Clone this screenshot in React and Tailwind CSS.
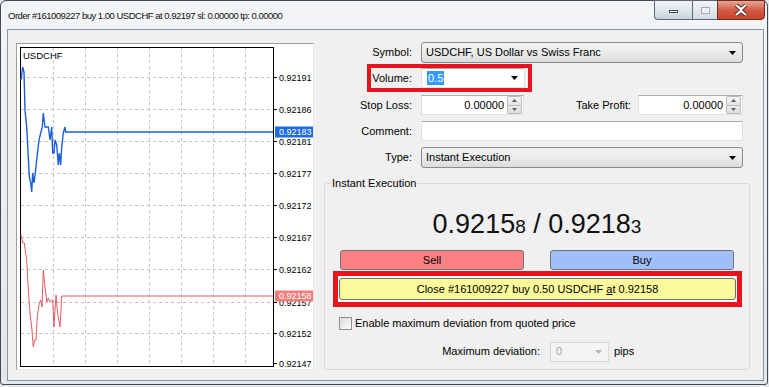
import React from "react";

const bluePts =
  "21,80 22.7,67 24,72 25,110 26.7,127 28.3,157 29.3,177 30.7,183 31.7,192 32.7,173 34,183 35.3,173 36.7,160 39,140 40.7,133 42.3,127 43.3,113 45,127 46.7,127 48.3,127 50,140 51.7,127 52.7,153 54,153 55,140 56.7,145 58.3,165 59.3,153 60.7,165 61.7,147 63.3,133 65,127 65.7,132 273,132";
const redPts =
  "21,235 22.7,243 24.3,243 26.7,260 28.3,290 30,313 31.7,327 33.3,347 34.7,340 36,340 37.3,317 39.3,303 40.7,300 42,307 43.3,270 45,287 46,295 46.7,302 48.3,298 50,302 51.7,300 52.7,300 54,327 55,310 56,295 57.3,310 58.3,318 60,327 61,310 61.7,296 273,296";

const levels = [
  ["0.92191", 77.5],
  ["0.92186", 109.5],
  ["0.92181", 141.5],
  ["0.92177", 173.5],
  ["0.92172", 205.5],
  ["0.92167", 237.5],
  ["0.92162", 269.5],
  ["0.92157", 302.5],
  ["0.92152", 333.5],
  ["0.92147", 363.5],
];
const vLines = [53.5, 85.5, 117.5, 149.5, 181.5, 213.5, 245.5];

function Caret({ color = "#000" }) {
  return (
    <svg width="7" height="4" viewBox="0 0 7 4">
      <path d="M0 0h7L3.5 4z" fill={color} />
    </svg>
  );
}

function Spinner() {
  return (
    <div className="w-[15px] h-full flex flex-col">
      <div className="flex-1 border border-[#b9bcc2] rounded-t-[2px] bg-gradient-to-b from-[#f6f6f6] to-[#e2e2e2] flex items-center justify-center">
        <svg width="5" height="3" viewBox="0 0 5 3"><path d="M0 3h5L2.5 0z" fill="#5a5a5a" /></svg>
      </div>
      <div className="flex-1 border border-t-0 border-[#b9bcc2] rounded-b-[2px] bg-gradient-to-b from-[#eeeeee] to-[#dadada] flex items-center justify-center">
        <svg width="5" height="3" viewBox="0 0 5 3"><path d="M0 0h5L2.5 3z" fill="#5a5a5a" /></svg>
      </div>
    </div>
  );
}

function Combo({ children, className = "" }) {
  return (
    <div className={`h-full flex items-center pl-[4px] pr-[6px] border border-[#8a8a8a] rounded-[3px] bg-gradient-to-b from-[#f3f3f3] via-[#ebebeb] to-[#dcdcdc] ${className}`}>
      <span className="flex-1">{children}</span>
      <Caret />
    </div>
  );
}

function Chart() {
  return (
    <div className="w-[298px] h-[327px] border border-[#a0a0a0] border-r-[#e6e6e6] border-b-[#e6e6e6] bg-white shrink-0">
      <svg width="296" height="325" viewBox="17 44 296 325" className="block">
        {levels.slice(0, 9).map(([, y]) => (
          <line key={y} x1="21" x2="273" y1={Math.floor(y) + 0.5} y2={Math.floor(y) + 0.5} stroke="#c4c4c4" strokeDasharray="3 3" />
        ))}
        {vLines.map((x) => (
          <line key={x} x1={x} x2={x} y1="48" y2="366" stroke="#c4c4c4" strokeDasharray="3 3" />
        ))}
        <rect x="20.5" y="47.5" width="253" height="319" fill="none" stroke="#000" />
        {levels.map(([t, y]) => (
          <g key={t}>
            <line x1="273" x2="277" y1={y} y2={y} stroke="#000" />
            <text x="279" y={y} dominantBaseline="central" fontSize="9" fill="#000" fontFamily="Liberation Sans, Arial, sans-serif">
              {t}
            </text>
          </g>
        ))}
        <text x="23" y="55" dominantBaseline="central" fontSize="9.5" fill="#000" fontFamily="Liberation Sans, Arial, sans-serif">
          USDCHF
        </text>
        <polyline points={bluePts} fill="none" stroke="#1b5fd8" strokeWidth="1.4" />
        <polyline points={redPts} fill="none" stroke="#e35a62" strokeWidth="1" />
        <rect x="275" y="126.5" width="38" height="11" fill="#1f6be0" />
        <text x="279" y="132" dominantBaseline="central" fontSize="9" fill="#fff" fontFamily="Liberation Sans, Arial, sans-serif">
          0.92183
        </text>
        <rect x="275" y="290.5" width="38" height="11" fill="#f27c7c" />
        <text x="279" y="296" dominantBaseline="central" fontSize="9" fill="#fff" fontFamily="Liberation Sans, Arial, sans-serif">
          0.92158
        </text>
      </svg>
    </div>
  );
}

function Input({ className = "", children }) {
  return (
    <div className={`h-full bg-white border border-[#dde1e7] border-t-[#abadb3] flex items-center ${className}`}>
      {children}
    </div>
  );
}

export default function App() {
  return (
    <div className="w-[769px] h-[387px] bg-[#e4e8ec] overflow-hidden font-['Liberation_Sans',Arial,sans-serif] text-black text-[11px]">
      <div className="w-[768px] h-[385px] border border-[#444a52] rounded-t-[6px] rounded-b-[3px] bg-gradient-to-b from-[#f3f5f7] to-[#e2e7ec] flex flex-col">
        {/* title bar */}
        <div className="h-[28px] shrink-0 flex items-start">
          <div className="pl-[7px] pt-[9px] text-[9.5px] leading-[11px] tracking-[-0.5px] text-[#111] whitespace-nowrap">
            Order #161009227 buy 1.00 USDCHF at 0.92197 sl: 0.00000 tp: 0.00000
          </div>
          <div className="ml-auto mr-[2px] -mt-px flex h-[20px]">
            <div className="w-[38px] h-full border border-[#5b6878] border-r-0 rounded-bl-[4px] bg-gradient-to-b from-[#f2f5f8] via-[#dfe6ed] to-[#c8d2dd] flex items-center justify-center">
              <div className="w-[9px] h-[3px] mt-[3px] bg-white border border-[#3f4a57]" />
            </div>
            <div className="w-[25px] h-full border border-[#5b6878] border-r-0 bg-gradient-to-b from-[#f2f5f8] via-[#e3e8ee] to-[#d2dae3] flex items-center justify-center">
              <div className="w-[9px] h-[7px] border border-[#a3acb7] bg-[#eef1f4]" />
            </div>
            <div className="w-[48px] h-full border border-[#6b2a22] rounded-br-[4px] bg-gradient-to-b from-[#e9a797] via-[#d25a44] to-[#c9432c] flex items-center justify-center">
              <svg width="14" height="12" viewBox="0 0 14 12">
                <path d="M2 1l5 4.2L12 1M2 11l5-4.2 5 4.2" stroke="#4a1a14" strokeWidth="4" fill="none" />
                <path d="M2 1l5 4.2L12 1M2 11l5-4.2 5 4.2" stroke="#fff" strokeWidth="2.2" fill="none" />
              </svg>
            </div>
          </div>
        </div>

        {/* client area */}
        <div className="flex-1 ml-[6px] mr-[3px] mb-[3px] border border-[#8e949b] bg-[#f0f0f0] flex items-start">
          <div className="ml-[8px] mt-[13px]">
            <Chart />
          </div>

          <div className="ml-[10px] w-[426px] flex flex-col">
            <div className="mt-[12px] h-[21px] flex items-center">
              <div className="w-[88px] text-right">Symbol:</div>
              <div className="ml-[9px] w-[322px] h-full">
                <Combo>USDCHF, US Dollar vs Swiss Franc</Combo>
              </div>
            </div>

            <div className="mt-[1px] flex">
              <div className="ml-[43px] h-[28px] border-[4px] border-[#e8131c] flex items-center pr-[3px]">
                <div className="w-[41px] text-right whitespace-nowrap">Volume:</div>
                <div className="ml-[9px] w-[104px] h-[20px]">
                  <Input className="pl-[5px] pr-[6px]">
                    <span className="bg-[#3399ff] text-white leading-[14px] px-px">0.5</span>
                    <span className="ml-auto"><Caret /></span>
                  </Input>
                </div>
              </div>
            </div>

            <div className="mt-[3px] h-[20px] flex items-center">
              <div className="w-[88px] text-right">Stop Loss:</div>
              <div className="ml-[9px] w-[103px] h-full">
                <Input className="pr-px">
                  <span className="flex-1 text-right pr-[3px]">0.00000</span>
                  <Spinner />
                </Input>
              </div>
              <div className="w-[107px] text-right">Take Profit:</div>
              <div className="ml-[7px] w-[105px] h-full">
                <Input className="pr-px">
                  <span className="flex-1 text-right pr-[3px]">0.00000</span>
                  <Spinner />
                </Input>
              </div>
            </div>

            <div className="mt-[6px] h-[20px] flex items-center">
              <div className="w-[88px] text-right">Comment:</div>
              <div className="ml-[9px] w-[322px] h-full">
                <Input />
              </div>
            </div>

            <div className="mt-[6px] h-[21px] flex items-center">
              <div className="w-[88px] text-right">Type:</div>
              <div className="ml-[9px] w-[322px] h-full">
                <Combo>Instant Execution</Combo>
              </div>
            </div>

            <fieldset className="mt-[8px] h-[194px] border border-[#d5dbe0] rounded-[3px]">
              <legend className="ml-[6px] px-px leading-[14px]">Instant Execution</legend>

              <div className="mt-[18px] leading-[32px] text-center text-[27px] text-[#111]">
                0.9215<span className="text-[19px]">8</span> / 0.9218<span className="text-[19px]">3</span>
              </div>

              <div className="mt-[7px] pl-[15px] flex gap-[26px]">
                <div className="w-[184px] h-[20px] border border-[#707070] rounded-[3px] bg-[#ff8282] flex items-center justify-center">Sell</div>
                <div className="w-[184px] h-[20px] border border-[#707070] rounded-[3px] bg-[#a0bff8] flex items-center justify-center">Buy</div>
              </div>

              <div className="mt-px ml-[8px] w-[409px] h-[36px] border-[5px] border-[#e8131c] bg-white px-px py-[2px]">
                <div className="h-full border border-[#707070] rounded-[3px] bg-[#fbfa9b] flex items-center justify-center whitespace-nowrap">
                  Close #161009227 buy 0.50 USDCHF&nbsp;<span className="underline">a</span>t 0.92158
                </div>
              </div>

              <div className="mt-[8px] ml-[14px] flex items-center">
                <div className="w-[13px] h-[13px] border border-[#8f8f8f] bg-gradient-to-br from-[#dcdcdc] to-[#fbfbfb]" />
                <span className="ml-[3px]">Enable maximum deviation from quoted price</span>
              </div>

              <div className="mt-[10px] h-[20px] flex items-center">
                <div className="w-[215px] text-right">Maximum deviation:</div>
                <div className="ml-[10px] w-[59px] h-full border border-[#d9d9d9] bg-[#f4f4f4] flex items-center pl-[5px] pr-[6px] text-[#a0a0a0]">
                  <span className="flex-1">0</span>
                  <Caret color="#b5b5b5" />
                </div>
                <span className="ml-[5px]">pips</span>
              </div>
            </fieldset>
          </div>
        </div>
      </div>
    </div>
  );
}
